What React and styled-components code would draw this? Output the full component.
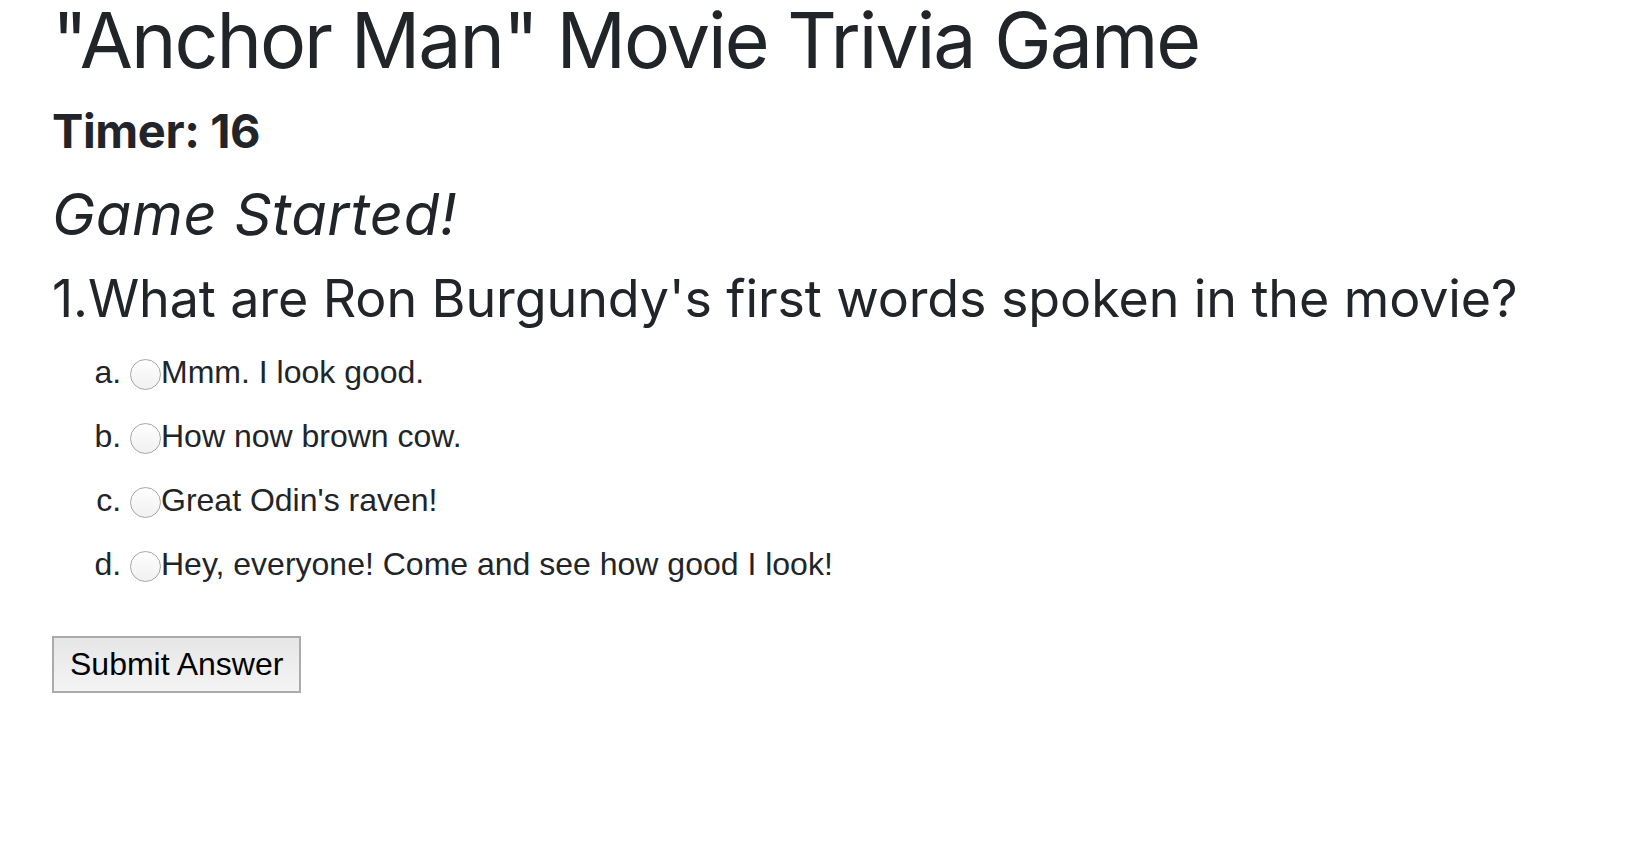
import React from 'react'
import styled, { createGlobalStyle } from 'styled-components'

const GlobalStyle = createGlobalStyle`
  body {
    margin: 0;
    background: #fff;
    color: #212529;
    font-family: Inter, "Noto Sans", sans-serif;
  }
`

const Page = styled.div`
  padding: 0 52px;
`

const Title = styled.h1`
  margin: 0;
  font-size: 77px;
  font-weight: 400;
  line-height: 80px;
  letter-spacing: -2px;
`

const Timer = styled.h4`
  margin: 23px 0 0;
  font-size: 47px;
  font-weight: 700;
  line-height: 56px;
  letter-spacing: -0.4px;
`

const Status = styled.h2`
  margin: 20px 0 0;
  font-size: 58px;
  font-weight: 400;
  font-style: italic;
  line-height: 70px;
  letter-spacing: 0.6px;
`

const Question = styled.h3`
  margin: 19px 0 0;
  font-size: 52px;
  font-weight: 400;
  line-height: 62px;
  letter-spacing: -0.1px;
`

const Options = styled.ol`
  list-style: lower-alpha;
  margin: 18px 0 0;
  padding-left: 78px;
  font-family: "Liberation Sans", Arial, sans-serif;
  font-size: 32px;
`

const Option = styled.li`
  line-height: 48px;
  margin-bottom: 16px;
`

const Radio = styled.input.attrs({ type: 'radio' })`
  appearance: none;
  width: 31px;
  height: 31px;
  margin: 0;
  vertical-align: -7px;
  border-radius: 50%;
  border: 1.5px solid #a8a8a8;
  background: linear-gradient(#fefefe, #f0f0f0);
  box-sizing: border-box;
`

const SubmitButton = styled.button`
  margin-top: 32px;
  padding: 8px 16px;
  font-family: "Liberation Sans", Arial, sans-serif;
  font-size: 32px;
  color: #000;
  border: 2px solid #ababab;
  background: linear-gradient(#e6e6e6, #f4f4f4);
  border-radius: 0;
`

const answers = [
  "Mmm. I look good.",
  "How now brown cow.",
  "Great Odin's raven!",
  "Hey, everyone! Come and see how good I look!",
]

const App = () => {
  return (
    <Page>
      <GlobalStyle />
      <Title>"Anchor Man" Movie Trivia Game</Title>
      <Timer>Timer: 16</Timer>
      <Status>Game Started!</Status>
      <Question>1.What are Ron Burgundy's first words spoken in the movie?</Question>
      <Options>
        {answers.map((a, i) => (
          <Option key={i}>
            <label>
              <Radio name="q1" value={i} />
              {a}
            </label>
          </Option>
        ))}
      </Options>
      <SubmitButton>Submit Answer</SubmitButton>
    </Page>
  )
}

export default App
